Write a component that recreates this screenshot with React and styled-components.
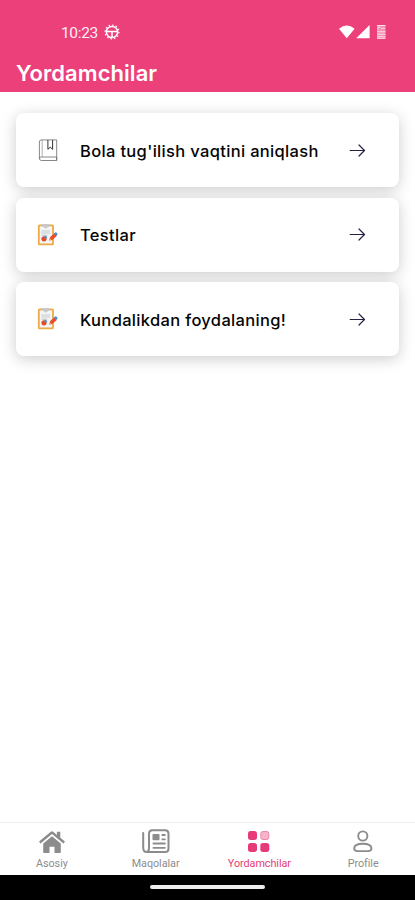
import React from "react";
import styled, { createGlobalStyle } from "styled-components";

const GlobalStyle = createGlobalStyle`
    * {
        box-sizing: border-box;
    }
    body {
        margin: 0;
        background: #fff;
        font-family: Roboto, "Liberation Sans", sans-serif;
    }
`;

const Screen = styled.div`
    display: flex;
    flex-direction: column;
    height: 100vh;
    overflow: hidden;
    background: #fff;
`;

const Header = styled.header`
    flex: none;
    height: 92px;
    padding-top: 22px;
    background: #ec407a;
    color: #fff;
`;

const StatusBar = styled.div`
    display: flex;
    align-items: center;
    height: 20px;
    padding: 0 29px 0 61px;
`;

const Clock = styled.span`
    width: 43px;
    padding-top: 1px;
    font-size: 15.5px;
    letter-spacing: -0.35px;
    line-height: 20px;
    opacity: 0.92;
`;

const StatusIcons = styled.div`
    display: flex;
    align-items: center;
    margin-left: auto;
`;

const Title = styled.h1`
    margin: 17px 0 0 16px;
    font-family: Inter, sans-serif;
    font-size: 22px;
    font-weight: 600;
    line-height: 29px;
    letter-spacing: 0.05px;
`;

const List = styled.main`
    flex: 1;
    display: flex;
    flex-direction: column;
    gap: 10.5px;
    padding: 21px 16px 0;
`;

const Card = styled.button`
    display: flex;
    align-items: center;
    flex: none;
    height: 74px;
    padding: 1px 31px 0 20px;
    border: 0;
    border-radius: 8px;
    background: #fff;
    box-shadow: 0 3px 15px rgba(0, 0, 0, 0.2);
    text-align: left;
`;

const CardIcon = styled.span`
    display: flex;
    width: 44px;
    padding-bottom: 1px;
`;

const CardText = styled.span`
    flex: 1;
    color: #050505;
    font-family: Inter, sans-serif;
    font-size: 16.5px;
    font-weight: 500;
    line-height: 22px;
    letter-spacing: 0.33px;
    white-space: nowrap;
`;

const TabBar = styled.nav`
    display: flex;
    flex: none;
    height: 53px;
    border-top: 1px solid #ededed;
    background: #fff;
`;

const Tab = styled.a`
    display: flex;
    flex: 1;
    flex-direction: column;
    align-items: center;
    padding-top: 6px;
    color: ${props => props.$active ? "#e63b78" : "#8c8c8c"};
`;

const TabLabel = styled.span`
    margin-top: 1px;
    font-size: 10.8px;
    font-weight: 400;
    line-height: 14px;
    letter-spacing: -0.05px;
`;

const GestureBar = styled.div`
    display: flex;
    flex: none;
    justify-content: center;
    height: 25px;
    padding-top: 10px;
    background: #000;
`;

const Handle = styled.div`
    width: 115px;
    height: 4px;
    border-radius: 2px;
    background: #ececec;
`;

const GearIcon = () => (
    <svg width="16" height="16" viewBox="0 0 16 16" fill="none" stroke="#fff">
        <circle cx="8" cy="8" r="5.6" strokeWidth="1.5" />
        <circle cx="8" cy="8" r="6.9" strokeWidth="1.3" strokeDasharray="1.5 2.11" />
        <path d="M3 7.5h10M8 7.5V13" strokeWidth="1.5" />
    </svg>
);

const SignalIcons = () => (
    <svg width="48" height="16" viewBox="0 0 48 16" fill="#fff">
        <path d="M1 4.7Q8.8-1.6 16.6 4.7L8.8 14.3z" />
        <path d="M31.6 1v13.2H18.2z" />
        <path d="M39 1h8.5v14H39z" opacity=".42" />
        <path d="M39 1h8.5v1H39zM39.7 2.8h2.6v1h-2v2.7h-.8zM43 4h4v.8h-4zM39 7.2h8.5v1H39zM39 9.8h8.5v1H39zM39 12.3h8.5v1H39zM39 14.2h8.5v.8H39z" opacity=".7" />
    </svg>
);

const BookIcon = () => (
    <svg width="24" height="24" viewBox="0 0 24 24" fill="none" stroke="#6a6a6a" strokeWidth=".8">
        <path d="M20.7 19V1.9H5.4A2 2 0 0 0 3.4 4v16.3q0 2.2 2 2.2h15.3V19H5.2q-1.8 0-1.8 1.6M20.7 19v3.5" />
        <path d="M6.2 2v17" stroke="#999" />
        <path d="M11.9 2v9.3l2.3-2.1 2.4 2.1V2" stroke="#333" strokeWidth="1" />
    </svg>
);

const ClipboardIcon = () => (
    <svg width="24" height="24" viewBox="0 0 24 24">
        <rect x="2.8" y="2.3" width="14.2" height="19" rx=".6" fill="#f4f5f6" stroke="#edaa45" strokeWidth="1.8" />
        <path d="M6 1h7.5v2.2q0 .8-.8.8h-1q-.5 1.6-1.9 1.6T7.9 4h-1Q6 4 6 3.2z" fill="#c8c8c6" />
        <path d="M5.3 8h8.8M5.3 10h8.8M5.3 12.2h6" stroke="#bac0c4" strokeWidth=".8" />
        <circle cx="8" cy="15.8" r="2.6" fill="#e54c26" />
        <path d="M8.5 15.3v-2.7a2.7 2.7 0 0 1 2.6 2.7z" fill="#4b91cf" />
        <path d="m13.2 17.5 1-3.6 4.2-3.6 2.4 2.7-4.5 3.9z" fill="#e84e27" />
        <path d="m17.9 10.7 1.2-1.1q.8-.6 1.5.1l.7.8q.6.8-.1 1.5L20 13z" fill="#478bd0" />
        <path d="m13.2 17.5.7-2.4 1.5 1.8z" fill="#e8a77b" />
    </svg>
);

const ArrowIcon = () => (
    <svg width="20" height="18" viewBox="0 0 20 18" fill="none" stroke="#252142" strokeWidth="1.2" strokeLinecap="round" strokeLinejoin="round">
        <path d="M2.2 8.5h14.3M11 3l5.5 5.5-5.5 5.5" />
    </svg>
);

const HomeIcon = () => (
    <svg width="28" height="27" viewBox="0 0 28 27" fill="currentColor">
        <path d="M14 7.2 5.2 14.5V23q0 1 1 1h5.3v-6.2h5V24h5.3q1 0 1-1v-8.5z" />
        <path d="M12.8 2.8q1.2-1 2.4 0l3.7 3.1V2.7h3.4v6L27 12.6l-1.6 1.9L14 5 2.6 14.5 1 12.6z" />
    </svg>
);

const NewsIcon = () => (
    <svg width="28" height="27" viewBox="0 0 28 27" fill="none" stroke="currentColor" strokeWidth="2" strokeLinecap="round">
        <path d="M1.2 4v14.5q0 4.5 3.5 4.5h18.6q3.2 0 3.2-3.2V4.7q0-3.5-3.2-3.5H10.2Q7 1.2 7 4.7v14.4Q7 23 4.5 23" />
        <rect x="10.5" y="5" width="7" height="6.2" rx=".7" fill="currentColor" stroke="none" />
        <path d="M20.3 6h2.6M20.3 10.3h2.6M11.4 14.5h11.5M11.4 18.8h11.5" strokeWidth="1.8" />
    </svg>
);

const GridIcon = () => (
    <svg width="28" height="27" viewBox="0 0 28 27" fill="currentColor">
        <rect x="3" y="2" width="9" height="9" rx="2.7" />
        <rect x="15.8" y="2.5" width="8" height="8" rx="2" fill="#f8b3ca" stroke="#ee86aa" />
        <rect x="3" y="14" width="9" height="9" rx="2.7" />
        <rect x="15.3" y="14" width="9" height="9" rx="2.7" />
    </svg>
);

const ProfileIcon = () => (
    <svg width="28" height="27" viewBox="0 0 28 27" fill="none" stroke="currentColor" strokeWidth="1.9">
        <circle cx="13.8" cy="7" r="4.6" />
        <path d="M5.2 19.3c0-3.2 4-4.6 8.6-4.6s8.6 1.4 8.6 4.6c0 2.1-1.4 2.8-3.2 2.8H8.4c-1.8 0-3.2-.7-3.2-2.8z" />
    </svg>
);

const cards = [
    { text: "Bola tug'ilish vaqtini aniqlash", icon: BookIcon },
    { text: "Testlar", icon: ClipboardIcon },
    { text: "Kundalikdan foydalaning!", icon: ClipboardIcon }
];

const tabs = [
    { label: "Asosiy", icon: HomeIcon },
    { label: "Maqolalar", icon: NewsIcon },
    { label: "Yordamchilar", icon: GridIcon, active: true },
    { label: "Profile", icon: ProfileIcon }
];

const App = () => {
    return (
        <Screen>
            <GlobalStyle />
            <Header>
                <StatusBar>
                    <Clock>10:23</Clock>
                    <GearIcon />
                    <StatusIcons>
                        <SignalIcons />
                    </StatusIcons>
                </StatusBar>
                <Title>Yordamchilar</Title>
            </Header>
            <List>
                {cards.map(({ text, icon: Icon }) => (
                    <Card key={text}>
                        <CardIcon><Icon /></CardIcon>
                        <CardText>{text}</CardText>
                        <ArrowIcon />
                    </Card>
                ))}
            </List>
            <TabBar>
                {tabs.map(({ label, icon: Icon, active }) => (
                    <Tab key={label} $active={active}>
                        <Icon />
                        <TabLabel>{label}</TabLabel>
                    </Tab>
                ))}
            </TabBar>
            <GestureBar>
                <Handle />
            </GestureBar>
        </Screen>
    );
}

export default App;
